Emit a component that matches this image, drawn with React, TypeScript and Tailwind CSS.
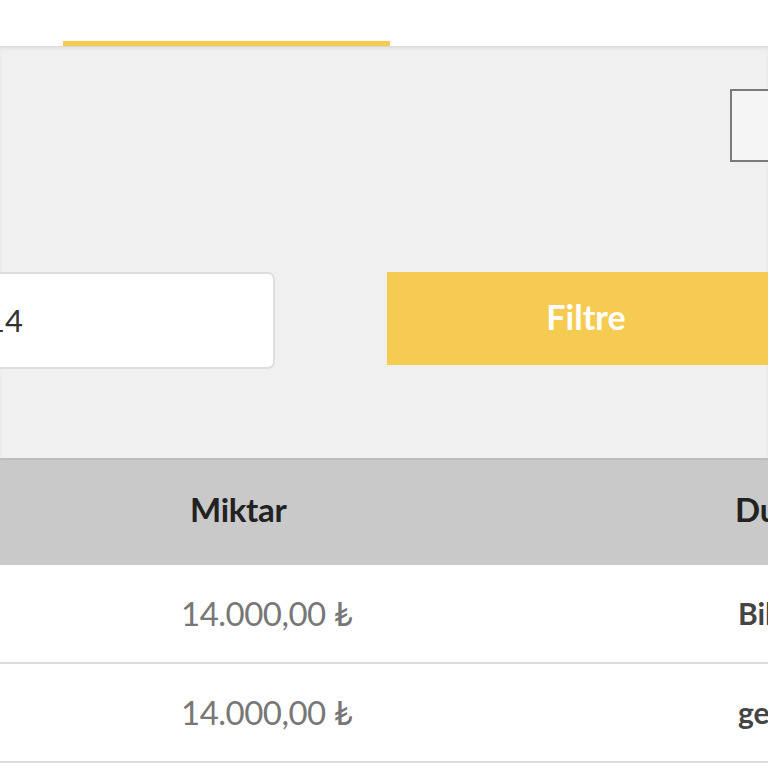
import React from "react";

const rows = [
  { amount: "14.000,00 ₺", status: "Bilgi bekleniyor" },
  { amount: "14.000,00 ₺", status: "gerçekleşti" },
];

export default function App() {
  return (
    <div className="h-[768px] w-[768px] overflow-hidden bg-white font-['Lato','Noto_Sans',sans-serif]">
      {/* TABS */}
      <div className="flex h-[47px] items-end border-b border-[#d9d9d9] bg-white">
        <div className="ml-[63px] h-[5px] w-[327px] shrink-0 bg-[#f6cb52]" />
      </div>

      {/* FILTER AREA */}
      <div className="flex h-[411px] flex-col bg-[#f0f0f0] shadow-[inset_0_2px_3px_rgba(0,0,0,0.06)]">
        <div className="flex justify-end pt-[42px]">
          <div className="h-[73px] w-[38px] shrink-0 border-2 border-r-0 border-[#7a7a7a] bg-[#f5f5f5]" />
        </div>

        <div className="mt-[110px] flex items-start gap-[112px]">
          <div className="ml-[-100px] flex h-[97px] w-[375px] shrink-0 items-center rounded-[7px] border-2 border-[#dedede] bg-white pl-[85px] text-[31px] text-[#333]">
            14
          </div>
          <button
            type="button"
            className="flex h-[93px] w-[420px] shrink-0 items-center justify-center bg-[#f6cb52] pb-[4px] pr-[22px] text-[34px] font-bold text-white"
          >
            Filtre
          </button>
        </div>
      </div>

      {/* TABLE */}
      <div className="flex h-[107px] items-center border-t-2 border-[#bdbdbd] bg-[#c9c9c9] pb-[5px] text-[33px] font-bold text-[#222]">
        <div className="w-[735px] shrink-0 pl-[190px] tracking-[-0.3px]">Miktar</div>
        <div className="shrink-0 whitespace-nowrap">Durum</div>
      </div>

      {rows.map((row, i) => (
        <div
          key={i}
          className="flex h-[99px] items-center border-b-2 border-[#dcdcdc] bg-white"
        >
          <div className="w-[738px] shrink-0 pl-[181px] text-[33px] tracking-[-0.5px] text-[#777]">
            {row.amount}
          </div>
          <div className="shrink-0 whitespace-nowrap text-[30px] font-bold text-[#444]">
            {row.status}
          </div>
        </div>
      ))}
    </div>
  );
}
